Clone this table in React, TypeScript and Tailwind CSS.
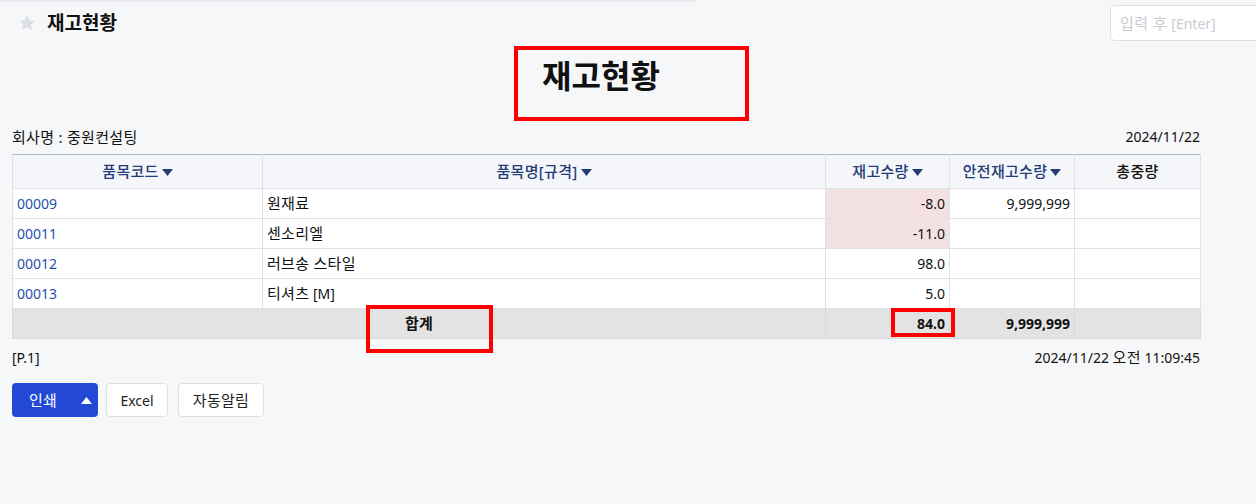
import React from "react";

const Tri = ({ up = false, color = "#253c78" }: { up?: boolean; color?: string }) => (
  <svg width="11" height="7" viewBox="0 0 11 7" className="inline-block ml-[3px] align-[1px]">
    {up ? <path d="M0 7 L5.5 0 L11 7 Z" fill={color} /> : <path d="M0 0 L11 0 L5.5 7 Z" fill={color} />}
  </svg>
);

const K = ({ children }: { children: React.ReactNode }) => (
  <span className="text-[15px] tracking-[0.3px]">{children}</span>
);

const rows = [
  { code: "00009", name: <K>원재료</K>, qty: "-8.0", safe: "9,999,999", neg: true },
  { code: "00011", name: <K>센소리엘</K>, qty: "-11.0", safe: "", neg: true },
  { code: "00012", name: <K>러브송 스타일</K>, qty: "98.0", safe: "", neg: false },
  {
    code: "00013",
    name: (
      <>
        <K>티셔츠</K> [M]
      </>
    ),
    qty: "5.0",
    safe: "",
    neg: false,
  },
];

export default function App() {
  return (
    <div
      className="relative min-h-[504px] w-[1256px] overflow-hidden bg-[#f6f7f9] text-[14px] text-[#111]"
      style={{ fontFamily: '"Noto Sans", "Noto Sans CJK KR", sans-serif' }}
    >
      <div className="absolute left-0 top-0 h-[3px] w-[695px] bg-gradient-to-b from-[#e3e5e9] to-transparent" />
      {/* header */}
      <div className="flex h-[46px] items-center pl-[18px]">
        <svg width="18" height="18" viewBox="0 0 24 24" className="mr-[11px]">
          <path
            d="M12 1.5l3.2 6.9 7.3.8-5.4 5 1.5 7.3L12 17.8l-6.6 3.7 1.5-7.3-5.4-5 7.3-.8z"
            fill="#dcdfe4"
          />
        </svg>
        <span className="text-[19px] font-bold leading-[24px] text-[#111]">재고현황</span>
        <div className="ml-auto mr-[-16px] flex h-[36px] w-[162px] shrink-0 items-center rounded-[5px] border border-[#dde1e6] bg-white pl-[9px] text-[15px] text-[#c6cbd3]">
          <span className="tracking-[0.5px]">입력 후</span>
          <span className="ml-[4px] text-[14px]">[Enter]</span>
        </div>
      </div>

      <div className="px-[12px]">
        {/* title */}
        <div className="flex h-[80px] w-[1188px] justify-center pt-[11px] pr-[10px]">
          <span className="text-[32px] font-bold leading-[38px] text-[#111]">재고현황</span>
        </div>
        <div className="flex h-[22px] w-[1188px] items-center justify-between leading-[20px]">
          <K>회사명 : 중원컨설팅</K>
          <span>2024/11/22</span>
        </div>

        <table className="mt-[6px] w-[1188px] table-fixed border-collapse border-t border-t-[#a9b8c8] text-[14px]">
          <colgroup>
            <col className="w-[250px]" />
            <col className="w-[563px]" />
            <col className="w-[124px]" />
            <col className="w-[125px]" />
            <col className="w-[126px]" />
          </colgroup>
          <thead>
            <tr className="h-[34px] bg-[#f4f6f9] text-[#253c78]">
              <th className="border border-t-0 border-[#dde2e8] font-medium">
                <K>품목코드</K>
                <Tri />
              </th>
              <th className="border border-t-0 border-[#dde2e8] font-medium">
                <K>품목명[규격]</K>
                <Tri />
              </th>
              <th className="border border-t-0 border-[#dde2e8] font-medium">
                <K>재고수량</K>
                <Tri />
              </th>
              <th className="border border-t-0 border-[#dde2e8] font-medium">
                <K>안전재고수량</K>
                <Tri />
              </th>
              <th className="border border-t-0 border-[#dde2e8] font-medium text-[#111]">
                <K>총중량</K>
              </th>
            </tr>
          </thead>
          <tbody>
            {rows.map((r) => (
              <tr key={r.code} className="h-[30px] bg-white">
                <td className="border border-[#dde2e8] px-[4px] text-[#1f4fae]">{r.code}</td>
                <td className="border border-[#dde2e8] px-[4px]">{r.name}</td>
                <td className={`border border-[#dde2e8] px-[4px] text-right ${r.neg ? "bg-[#f3e0e1]" : ""}`}>
                  {r.qty}
                </td>
                <td className="border border-[#dde2e8] px-[4px] text-right">{r.safe}</td>
                <td className="border border-[#dde2e8] px-[4px]"></td>
              </tr>
            ))}
            <tr className="h-[30px] bg-[#e3e3e3] font-bold">
              <td colSpan={2} className="border border-[#dadada] text-center">
                <K>합계</K>
              </td>
              <td className="border border-[#dadada] px-[4px] text-right">84.0</td>
              <td className="border border-[#dadada] px-[4px] text-right">9,999,999</td>
              <td className="border border-[#dadada]"></td>
            </tr>
          </tbody>
        </table>

        <div className="flex h-[36px] w-[1188px] items-center justify-between">
          <span>[P.1]</span>
          <span>
            2024/11/22 <K>오전</K> 11:09:45
          </span>
        </div>

        <div className="mt-[8px] flex h-[34px] items-stretch">
          <button className="flex w-[86px] items-center rounded-[4px] bg-[#2348d6] pl-[17px] pr-[6px] text-white">
            <K>인쇄</K>
            <span className="ml-auto flex items-center">
              <Tri up color="#ffffff" />
            </span>
          </button>
          <button className="ml-[8px] w-[62px] rounded-[4px] border border-[#dde1e6] bg-white text-[#222]">
            Excel
          </button>
          <button className="ml-[10px] w-[86px] rounded-[4px] border border-[#dde1e6] bg-white text-[#222]">
            <K>자동알림</K>
          </button>
        </div>
      </div>

      {/* annotation boxes */}
      <div className="absolute left-[514px] top-[46px] h-[75px] w-[235px] border-[4px] border-[#ff0000]" />
      <div className="absolute left-[366px] top-[305px] h-[48px] w-[127px] border-[4px] border-[#ff0000]" />
      <div className="absolute left-[891px] top-[308px] h-[29px] w-[64px] border-[4px] border-[#ff0000]" />
    </div>
  );
}
